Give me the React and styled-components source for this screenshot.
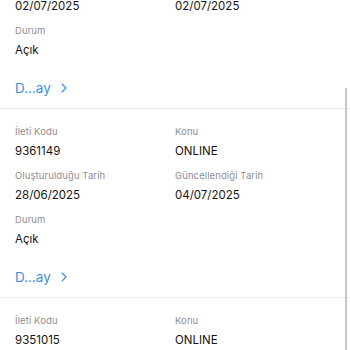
import React, { useLayoutEffect, useRef } from "react";
import styled, { createGlobalStyle } from "styled-components";
import { ChevronRight } from "lucide-react";

const Global = createGlobalStyle`
  html, body { margin: 0; padding: 0; background: #fff; }
  body { font-family: Inter, "Noto Sans", "Liberation Sans", sans-serif; -webkit-font-smoothing: antialiased; }
`;

const Screen = styled.div`
  position: relative;
  width: 350px;
  height: 350px;
  overflow: hidden;
  background: #fff;
`;

const Scroller = styled.div`
  height: 100%;
  overflow-y: auto;
  scrollbar-width: none;
  &::-webkit-scrollbar { display: none; }
`;

const ScrollThumb = styled.div`
  position: absolute;
  top: 88px;
  right: 3px;
  width: 2.5px;
  height: 270px;
  border-radius: 2px;
  background: #c6c6c8;
`;

const Record = styled.section`
  padding: 16px 15px 10px;
  border-bottom: 1px solid #ececec;
`;

const Grid = styled.div`
  display: grid;
  grid-template-columns: 1fr 1fr;
  row-gap: 9px;
`;

const Field = styled.div`
  display: flex;
  flex-direction: column;
  gap: 3px;
`;

const Label = styled.span`
  font-size: 9.5px;
  line-height: 14px;
  letter-spacing: 0.1px;
  color: #8e8e93;
`;

const Value = styled.span`
  font-size: 11.5px;
  line-height: 18px;
  color: #141414;
`;

const DetailLink = styled.a`
  display: inline-flex;
  align-items: center;
  gap: 5px;
  margin-top: 19px;
  font-size: 13.5px;
  line-height: 20px;
  color: #3f8ee0;
  text-decoration: none;
  svg { margin-top: -1px; }
`;

const records = [
  { code: "9361150", subject: "ONLINE", created: "02/07/2025", updated: "02/07/2025", status: "Açık" },
  { code: "9361149", subject: "ONLINE", created: "28/06/2025", updated: "04/07/2025", status: "Açık" },
  { code: "9351015", subject: "ONLINE", created: "20/06/2025", updated: "27/06/2025", status: "Açık" },
];

function RecordCard({ r }) {
  return (
    <Record>
      <Grid>
        <Field><Label>İleti Kodu</Label><Value>{r.code}</Value></Field>
        <Field><Label>Konu</Label><Value>{r.subject}</Value></Field>
        <Field><Label>Oluşturulduğu Tarih</Label><Value>{r.created}</Value></Field>
        <Field><Label>Güncellendiği Tarih</Label><Value>{r.updated}</Value></Field>
        <Field><Label>Durum</Label><Value>{r.status}</Value></Field>
      </Grid>
      <DetailLink href="#">
        D...ay
        <ChevronRight size={16} strokeWidth={1.6} />
      </DetailLink>
    </Record>
  );
}

export default function App() {
  const ref = useRef(null);
  useLayoutEffect(() => {
    if (ref.current) ref.current.scrollTop = 80;
  }, []);
  return (
    <>
      <Global />
      <Screen>
        <Scroller ref={ref}>
          {records.map((r) => (
            <RecordCard key={r.code} r={r} />
          ))}
        </Scroller>
        <ScrollThumb />
      </Screen>
    </>
  );
}
